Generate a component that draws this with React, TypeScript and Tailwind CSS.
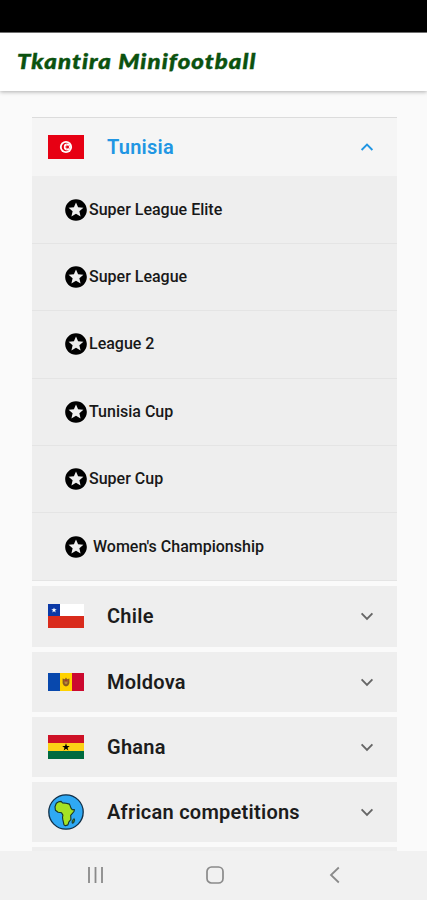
import React, { useState } from "react";
import { MdStars } from "react-icons/md";

interface Group {
  name: string;
  icon: React.ReactNode;
  leagues: string[];
}

const TunisiaFlag = () => (
  <svg viewBox="0 0 36 24" className="w-9 h-6">
    <rect width="36" height="24" fill="#e70013" />
    <circle cx="18" cy="12" r="6.1" fill="#fff" />
    <circle cx="18" cy="12" r="4.3" fill="#e70013" />
    <circle cx="19.2" cy="12" r="3.4" fill="#fff" />
    <path
      d="M16.6 12l2-.7v-2l1.2 1.6 2-.6-1.2 1.7 1.2 1.7-2-.6-1.2 1.6v-2z"
      fill="#e70013"
    />
  </svg>
);

const ChileFlag = () => (
  <svg viewBox="0 0 36 24" className="w-9 h-6">
    <rect width="36" height="12" fill="#fff" />
    <rect y="12" width="36" height="12" fill="#d92b1c" />
    <rect width="12" height="12" fill="#0b39a6" />
    <path
      d="M6 3.4l.7 1.9h2L7.1 6.5l.6 1.9L6 7.2 4.3 8.4l.6-1.9-1.6-1.2h2z"
      fill="#fff"
    />
  </svg>
);

const MoldovaFlag = () => (
  <svg viewBox="0 0 36 18" className="w-9 h-[18px]">
    <rect width="12" height="18" fill="#0848ad" />
    <rect x="12" width="12" height="18" fill="#ffd200" />
    <rect x="24" width="12" height="18" fill="#cc092f" />
    <path
      d="M14.6 5.6l2.2.6L18 4.6l1.2 1.6 2.2-.6v4.6l-1.2 2.2L18 13.6l-2.2-1.2-1.2-2.2z"
      fill="#8b5a22"
    />
    <path d="M16.5 7h3v3.2L18 11.4l-1.5-1.2z" fill="#b98a3a" />
    <path d="M16.5 7h3v1.5h-3z" fill="#a03a2c" />
  </svg>
);

const GhanaFlag = () => (
  <svg viewBox="0 0 36 24" className="w-9 h-6">
    <rect width="36" height="8" fill="#ce1126" />
    <rect y="8" width="36" height="8" fill="#fcd116" />
    <rect y="16" width="36" height="8" fill="#006b3f" />
    <path
      d="M18 8.2l.95 2.7h2.85l-2.3 1.75.85 2.75L18 13.75l-2.35 1.65.85-2.75-2.3-1.75h2.85z"
      fill="#000"
    />
  </svg>
);

const AfricaGlobe = () => (
  <svg viewBox="0 0 36 36" className="w-9 h-9">
    <circle cx="18" cy="18" r="17.2" fill="#2fa9f4" stroke="#123048" strokeWidth="1.3" />
    <path
      d="M8.3 9.2l2.4-1.4 2.4-.4 1.4 1.5 3.6.3 3.4.9 1.5 4 1.4 1.7 2-.2-.4 1.9-3.3 3.8.2 4.2-2 2.4-1 3-2.6.8-1.3-.8-1.1-5-.4-2.4.4-2.4-1.4-2.4-3.4-.4-2.7-2-.4-3.6z"
      fill="#a5e224"
      stroke="#16332b"
      strokeWidth="1.1"
      strokeLinejoin="round"
    />
    <path
      d="M24.2 26.4l2-1.8.5 1.6-1.1 2.8-1.5.2z"
      fill="#3c7a28"
      stroke="#16332b"
      strokeWidth="0.9"
    />
  </svg>
);

const groups: Group[] = [
  {
    name: "Tunisia",
    icon: <TunisiaFlag />,
    leagues: [
      "Super League Elite",
      "Super League",
      "League 2",
      "Tunisia Cup",
      "Super Cup",
      " Women's Championship",
    ],
  },
  { name: "Chile", icon: <ChileFlag />, leagues: [] },
  { name: "Moldova", icon: <MoldovaFlag />, leagues: [] },
  { name: "Ghana", icon: <GhanaFlag />, leagues: [] },
  { name: "African competitions", icon: <AfricaGlobe />, leagues: [] },
];

const Chevron = ({ open }: { open: boolean }) => (
  <svg
    viewBox="0 0 14 14"
    className={open ? "w-3.5 h-3.5 text-[#2196e3]" : "w-3.5 h-3.5 text-[#666666]"}
    fill="none"
    stroke="currentColor"
    strokeWidth="1.9"
  >
    <path d={open ? "M1.6 10L7 4.6l5.4 5.4" : "M1.6 4.4L7 9.8l5.4-5.4"} />
  </svg>
);

export default function App() {
  const [openName, setOpenName] = useState("Tunisia");

  return (
    <div className="h-[900px] w-full flex flex-col overflow-hidden bg-[#fafafa] font-[Roboto,sans-serif]">
      {/* Status bar */}
      <div className="h-[33px] shrink-0 bg-black border-b border-[#777777]" />

      {/* App bar */}
      <header className="relative h-[58px] shrink-0 flex items-center pl-[17px] pb-[2px] bg-white shadow-[0_1px_4px_rgba(0,0,0,0.3)]">
        <h1 className="font-[Lato,sans-serif] font-black italic text-[20px] leading-none tracking-[0.9px] whitespace-nowrap text-[#0b520f] origin-left scale-x-[1.2] [-webkit-text-stroke:0.4px_#0b520f]">
          Tkantira Minifootball
        </h1>
      </header>

      {/* Accordion */}
      <main className="flex-1 min-h-0 overflow-hidden pt-[26px] pl-8 pr-[30px]">
        {groups.map((group) => {
          const open = group.name === openName;
          return (
            <section key={group.name} className="mb-[5px]">
              <button
                onClick={() => setOpenName(open ? "" : group.name)}
                className={
                  open
                    ? "w-full h-[59.4px] flex items-center pl-4 pr-[23px] pb-px bg-[#f5f5f5] border-t border-[#dcdcdc]"
                    : "w-full h-[60.2px] flex items-center pl-4 pr-[23px] bg-[#eeeeee]"
                }
              >
                <span className="w-9 flex items-center justify-center">{group.icon}</span>
                <span
                  className={
                    open
                      ? "ml-[23px] flex-1 text-left text-[20px] font-semibold tracking-[0.25px] text-[#2196e3]"
                      : "ml-[23px] flex-1 text-left text-[20px] font-semibold tracking-[0.25px] text-[#1c1c1c]"
                  }
                >
                  {group.name}
                </span>
                <Chevron open={open} />
              </button>

              {open && (
                <ul className="bg-[#eeeeee] pb-[0.6px]">
                  {group.leagues.map((league) => (
                    <li
                      key={league}
                      className="h-[67.4px] flex items-center pl-[31px] border-b border-[#e4e4e4]"
                    >
                      <MdStars className="w-[26px] h-[26px] shrink-0 text-black" />
                      <span className="text-[16px] font-medium whitespace-pre text-[#181818]">
                        {league}
                      </span>
                    </li>
                  ))}
                </ul>
              )}
            </section>
          );
        })}
        <div className="h-[60px] bg-[#eeeeee]" />
      </main>

      {/* System navigation */}
      <nav className="h-[49px] shrink-0 flex items-center pb-0.5 pl-[87px] bg-[#f1f1f1] text-[#8a8a8a]">
        <svg viewBox="0 0 17 18" className="w-[17px] h-[18px]" fill="none" stroke="currentColor" strokeWidth="1.8">
          <path d="M2 1v16M8.5 1v16M15 1v16" />
        </svg>
        <svg viewBox="0 0 18 18" className="ml-[102px] w-[18px] h-[18px]" fill="none" stroke="currentColor" strokeWidth="1.7">
          <rect x="1" y="1" width="16" height="16" rx="4.5" />
        </svg>
        <svg viewBox="0 0 11 18" className="ml-[105px] w-[11px] h-[18px]" fill="none" stroke="currentColor" strokeWidth="1.8">
          <path d="M9.8 1.5L2 9l7.8 7.5" />
        </svg>
      </nav>
    </div>
  );
}
